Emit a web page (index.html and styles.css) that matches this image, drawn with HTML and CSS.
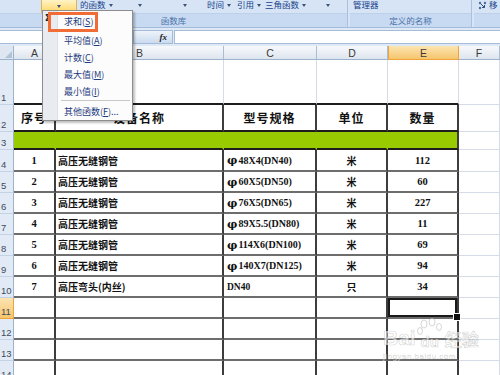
FILE: index.html
```html
<!doctype html>
<html>

<head>
    <title>自动求和</title>
    <link rel="stylesheet" href="styles.css">
</head>

<body>
    <div class="ribbon">
        <div class="group g1">
            <div class="tools tools-1">
                <span></span>
                <span class="hot"><span class="dd"></span></span>
                <span class="tool">的函数<span class="dd"></span></span>
                <span class="tool"><span class="dd"></span></span>
                <span class="tool"><span class="dd"></span></span>
                <span class="tool">时间<span class="dd"></span></span>
                <span class="tool">引用<span class="dd"></span></span>
                <span class="tool">三角函数<span class="dd"></span></span>
                <span class="tool"><span class="dd"></span></span>
            </div>
            <div class="glabel">函数库</div>
        </div>
        <div class="group g2">
            <div class="tools"><span class="tool">管理器</span></div>
            <div class="glabel">定义的名称</div>
        </div>
        <div class="group g3">
            <div class="tools">
                <svg class="trace" width="9" height="9" viewBox="0 0 9 9">
                    <circle cx="2" cy="2" r="1.2" fill="#4d6c99" />
                    <circle cx="7" cy="2" r="1.2" fill="#4d6c99" />
                    <circle cx="2" cy="7" r="1.2" fill="#4d6c99" />
                    <path d="M3 3 L6.5 6.5 M6.5 4 V6.5 H4" stroke="#2f4f80" stroke-width="1" fill="none" />
                </svg>
                <span class="tool">移</span>
            </div>
            <div class="glabel"></div>
        </div>
    </div>

    <div class="fbar">
        <div class="namebox"></div>
        <div class="split"></div>
        <div class="fx"><i>fx</i></div>
        <div class="finput"></div>
    </div>

    <div class="sheet">
        <div class="row hdr">
            <div class="c corner"></div>
            <div class="c ch">A</div>
            <div class="c ch">B</div>
            <div class="c ch">C</div>
            <div class="c ch">D</div>
            <div class="c ch on">E</div>
            <div class="c ch">F</div>
        </div>

        <div class="row r1">
            <div class="c rh">1</div>
            <div class="c top"></div>
            <div class="c top"></div>
            <div class="c top"></div>
            <div class="c top"></div>
            <div class="c top"></div>
            <div class="c"></div>
        </div>

        <div class="row r2">
            <div class="c rh">2</div>
            <div class="c t th">序号</div>
            <div class="c t th">设备名称</div>
            <div class="c t th">型号规格</div>
            <div class="c t th">单位</div>
            <div class="c t th">数量</div>
            <div class="c"></div>
        </div>

        <div class="row r3">
            <div class="c rh">3</div>
            <div class="c g"></div>
            <div class="c g"></div>
            <div class="c g"></div>
            <div class="c g"></div>
            <div class="c g end"></div>
            <div class="c"></div>
        </div>

        <div class="row r4">
            <div class="c rh">4</div>
            <div class="c t n">1</div>
            <div class="c t nm">高压无缝钢管</div>
            <div class="c t sp"><span class="phi">φ</span>48X4(DN40)</div>
            <div class="c t u">米</div>
            <div class="c t n">112</div>
            <div class="c"></div>
        </div>

        <div class="row rn">
            <div class="c rh">5</div>
            <div class="c t n">2</div>
            <div class="c t nm">高压无缝钢管</div>
            <div class="c t sp"><span class="phi">φ</span>60X5(DN50)</div>
            <div class="c t u">米</div>
            <div class="c t n">60</div>
            <div class="c"></div>
        </div>

        <div class="row rn">
            <div class="c rh">6</div>
            <div class="c t n">3</div>
            <div class="c t nm">高压无缝钢管</div>
            <div class="c t sp"><span class="phi">φ</span>76X5(DN65)</div>
            <div class="c t u">米</div>
            <div class="c t n">227</div>
            <div class="c"></div>
        </div>

        <div class="row rn">
            <div class="c rh">7</div>
            <div class="c t n">4</div>
            <div class="c t nm">高压无缝钢管</div>
            <div class="c t sp"><span class="phi">φ</span>89X5.5(DN80)</div>
            <div class="c t u">米</div>
            <div class="c t n">11</div>
            <div class="c"></div>
        </div>

        <div class="row rn">
            <div class="c rh">8</div>
            <div class="c t n">5</div>
            <div class="c t nm">高压无缝钢管</div>
            <div class="c t sp"><span class="phi">φ</span>114X6(DN100)</div>
            <div class="c t u">米</div>
            <div class="c t n">69</div>
            <div class="c"></div>
        </div>

        <div class="row rn">
            <div class="c rh">9</div>
            <div class="c t n">6</div>
            <div class="c t nm">高压无缝钢管</div>
            <div class="c t sp"><span class="phi">φ</span>140X7(DN125)</div>
            <div class="c t u">米</div>
            <div class="c t n">94</div>
            <div class="c"></div>
        </div>

        <div class="row rn">
            <div class="c rh">10</div>
            <div class="c t n">7</div>
            <div class="c t nm">高压弯头(内丝)</div>
            <div class="c t sp small">DN40</div>
            <div class="c t u">只</div>
            <div class="c t n">34</div>
            <div class="c"></div>
        </div>

        <div class="row rn">
            <div class="c rh on">11</div>
            <div class="c t"></div>
            <div class="c t"></div>
            <div class="c t"></div>
            <div class="c t"></div>
            <div class="c t sel"></div>
            <div class="c"></div>
        </div>

        <div class="row rn">
            <div class="c rh">12</div>
            <div class="c t"></div>
            <div class="c t"></div>
            <div class="c t"></div>
            <div class="c t"></div>
            <div class="c t"></div>
            <div class="c"></div>
        </div>

        <div class="row rn">
            <div class="c rh">13</div>
            <div class="c t"></div>
            <div class="c t"></div>
            <div class="c t"></div>
            <div class="c t"></div>
            <div class="c t"></div>
            <div class="c"></div>
        </div>

        <div class="row rn">
            <div class="c rh">14</div>
            <div class="c t"></div>
            <div class="c t"></div>
            <div class="c t"></div>
            <div class="c t"></div>
            <div class="c t"></div>
            <div class="c"></div>
        </div>
    </div>

    <!-- 自动求和 下拉菜单 -->
    <div class="menu">
        <div class="gutter"><span class="sigma">Σ</span></div>
        <ul class="items">
            <li class="first">求和(<u>S</u>)</li>
            <li>平均值(<u>A</u>)</li>
            <li>计数(<u>C</u>)</li>
            <li>最大值(<u>M</u>)</li>
            <li>最小值(<u>I</u>)</li>
            <li class="sep"></li>
            <li>其他函数(<u>F</u>)...</li>
        </ul>
        <div class="hl"></div>
    </div>

    <div class="wm">
        <div class="wm-logo">
            <span>Bai</span>
            <span class="paw">
                <svg width="26" height="26" viewBox="0 0 26 26">
                    <g fill="rgba(255,255,255,0.4)" stroke="rgba(110,110,110,0.28)" stroke-width="1">
                        <ellipse cx="7" cy="6" rx="3" ry="4" />
                        <ellipse cx="15" cy="4" rx="3" ry="4" />
                        <ellipse cx="22" cy="9" rx="2.5" ry="3.5" />
                        <ellipse cx="3" cy="13" rx="2.5" ry="3.5" />
                    </g>
                </svg>
                <span class="du">du</span>
            </span>
            <span class="cn">经验</span>
        </div>
        <div class="wm-url">jingyan.baidu.com</div>
    </div>
</body>

</html>
```

FILE: styles.css
```css
html,
body {
    margin: 0;
    padding: 0;
    width: 100%;
    height: 100%;
    overflow: hidden;
}

* {
    box-sizing: border-box;
}

body {
    position: relative;
    background: #dfe9f5;
    font-family: "Liberation Sans", "Noto Sans CJK SC", sans-serif;
}

/* ribbon */
.ribbon {
    display: flex;
    height: 28px;
    background: #d7e4f5;
    border-bottom: 1px solid #a3bcdb;
}

.group {
    display: flex;
    flex-direction: column;
    border-right: 1px solid #a9c1df;
    margin-right: 2px;
}

.g1 {
    width: 348px;
}

.g2 {
    width: 122px;
}

.g3 {
    flex: 1;
    border-right: 0;
    margin-right: 0;
}

.tools {
    display: flex;
    align-items: flex-end;
    height: 13px;
    overflow: hidden;
    font-family: "Noto Sans CJK SC", sans-serif;
    font-size: 8.5px;
    color: #15428b;
}

.tools-1 {
    display: grid;
    grid-template-columns: 41px 36px 58px 45px 27px 30px 28px 58px 1fr;
    align-items: end;
}

.tool {
    line-height: 9px;
    margin-bottom: 4px;
    white-space: nowrap;
}

.tools-1 .tool:nth-child(3) {
    padding-left: 3px;
}

.g2 .tool {
    padding-left: 3px;
}

.g3 .tools {
    padding-left: 4px;
    gap: 2px;
}

.trace {
    margin-bottom: 3px;
}

.dd {
    display: inline-block;
    width: 0;
    height: 0;
    margin-left: 3px;
    vertical-align: middle;
    border-left: 2.5px solid transparent;
    border-right: 2.5px solid transparent;
    border-top: 3px solid #3b5478;
}

.hot {
    align-self: stretch;
    display: flex;
    align-items: center;
    justify-content: center;
    background: linear-gradient(#fff3c6, #ffd767);
    border: 1px solid #d8b55e;
    border-top: 0;
}

.hot .dd {
    margin-left: 0;
}

.glabel {
    height: 14px;
    background: #c7daf1;
    border-top: 1px solid #bdd1ea;
    color: #4a70a8;
    font-family: "Noto Sans CJK SC", sans-serif;
    font-size: 8.5px;
    line-height: 13px;
    text-align: center;
}

/* formula bar */
.fbar {
    display: flex;
    height: 14px;
    margin-top: 2px;
}

.namebox {
    width: 125px;
    background: #fff;
    border: 1px solid #a5bcd8;
    border-left: 0;
}

.split {
    width: 8px;
}

.fx {
    width: 40px;
    background: linear-gradient(#eef3fa, #cbdbef);
    border: 1px solid #a5bcd8;
    text-align: right;
    padding-right: 5px;
    font: italic bold 9px "Liberation Serif", serif;
    line-height: 12px;
    color: #222;
}

.finput {
    flex: 1;
    margin-left: 1px;
    background: #fff;
    border: 1px solid #a5bcd8;
    border-right: 0;
}

/* sheet */
.sheet {
    margin-top: 2px;
    background: #fff;
}

.row {
    display: grid;
    grid-template-columns: 14px 42px 168px 93px 71px 71px 1fr;
}

.hdr {
    height: 14px;
}

.r1 {
    height: 45px;
}

.r2 {
    height: 27px;
}

.r3 {
    height: 18px;
}

.r4 {
    height: 22px;
}

.rn {
    height: 21px;
}

.c {
    display: flex;
    align-items: center;
    min-width: 0;
    overflow: hidden;
    white-space: nowrap;
    border-right: 1px solid #d5dce7;
    border-bottom: 1px solid #d5dce7;
    color: #111;
}

.corner {
    position: relative;
    background: #dde6f1;
    border-right: 1px solid #9db3cd;
    border-bottom: 1px solid #9db3cd;
}

.corner::after {
    content: "";
    position: absolute;
    right: 1px;
    bottom: 1px;
    border-left: 7px solid transparent;
    border-bottom: 7px solid #b3c3d6;
}

.ch {
    justify-content: center;
    background: linear-gradient(#f7f9fc, #dee5ee);
    border-right: 1px solid #aabdd4;
    border-bottom: 1px solid #9db3cd;
    font-size: 10.5px;
    color: #3a3a3a;
}

.ch.on {
    background: linear-gradient(#fce5b2, #f5c56c);
    border-left: 1px solid #f0a23c;
    border-right-color: #f0a23c;
    border-bottom-color: #f0a23c;
}

.rh {
    align-items: flex-end;
    padding: 0 0 1px 1px;
    background: #e2eaf5;
    border-right: 1px solid #9db3cd;
    border-bottom: 1px solid #c4d2e5;
    font-size: 9.5px;
    line-height: 11px;
    color: #3e4b5e;
}

.rh.on {
    background: linear-gradient(#fce5b2, #f5c56c);
    border-right-color: #f0a23c;
    border-bottom-color: #f0a23c;
}

.top {
    border-bottom: 2px solid #1d1d1d;
}

.t {
    border-right: 2px solid #3d3d3d;
    border-bottom: 2px solid #6d6d6d;
}

.th {
    justify-content: center;
    border-bottom-color: #1d1d1d;
    font: bold 12px "Noto Sans CJK SC", sans-serif;
    letter-spacing: 1px;
}

.g {
    background: #99cc00;
    border-right: 2px solid #99cc00;
    border-bottom: 2px solid #1d1d1d;
}

.g.end {
    border-right-color: #3d3d3d;
}

.n {
    justify-content: center;
    font: bold 10.5px "Liberation Serif", serif;
}

.nm {
    padding-left: 2px;
    font: bold 10px "Noto Sans CJK SC", sans-serif;
}

.sp {
    padding-left: 3px;
    font: bold 10px "Liberation Serif", serif;
}

.sp.small {
    font-size: 9.5px;
}

.phi {
    font: bold 11.5px "DejaVu Serif", serif;
    margin-right: 1px;
}

.u {
    justify-content: center;
    font: bold 10px "Noto Sans CJK SC", sans-serif;
}

.sel {
    position: relative;
    z-index: 1;
    overflow: visible;
    box-shadow: inset 0 0 0 2px #1a1a1a;
}

.sel::after {
    content: "";
    position: absolute;
    right: -4px;
    bottom: -4px;
    width: 6px;
    height: 6px;
    background: #111;
    border: 1px solid #fff;
}

/* dropdown menu */
.menu {
    position: absolute;
    left: 42px;
    top: 10px;
    z-index: 5;
    display: flex;
    width: 91px;
    height: 111px;
    background: #fcfcfc;
    border: 1px solid #8d8d8d;
    box-shadow: 2px 2px 2px rgba(0, 0, 0, 0.25);
    font: 9px "Noto Sans CJK SC", sans-serif;
    color: #1d3b7c;
}

.gutter {
    width: 15px;
    padding: 4px 0 0 2px;
    background: #e8ecf1;
    border-right: 1px solid #dde1e7;
}

.sigma {
    display: block;
    font: bold 8px "DejaVu Sans", sans-serif;
    line-height: 8px;
    color: #222;
}

.items {
    flex: 1;
    list-style: none;
    margin: 0;
    padding: 0;
}

.items li {
    display: flex;
    align-items: center;
    height: 17px;
    padding-left: 6px;
    white-space: nowrap;
}

.items li.first {
    height: 21px;
}

.items li.sep {
    height: 3px;
    margin: 0 2px 0 3px;
    border-top: 1px solid #c8c8c8;
}

.items u {
    text-underline-offset: 1px;
}

.hl {
    position: absolute;
    left: 5px;
    top: 1px;
    width: 50px;
    height: 20px;
    border: 3px solid #f26d35;
}

/* watermark */
.wm {
    position: absolute;
    left: 383px;
    top: 318px;
    z-index: 4;
    pointer-events: none;
}

.wm-logo {
    display: flex;
    align-items: flex-end;
    font: bold 21px "Liberation Sans", sans-serif;
    line-height: 24px;
    color: rgba(255, 255, 255, 0.6);
    -webkit-text-stroke: 0.7px rgba(110, 110, 110, 0.3);
}

.paw {
    position: relative;
    display: flex;
    flex-direction: column;
    align-items: center;
    margin-left: 1px;
}

.paw svg {
    margin-bottom: -10px;
}

.du {
    font-size: 15px;
    line-height: 16px;
}

.cn {
    font: bold 17px "Noto Sans CJK SC", sans-serif;
    line-height: 22px;
    margin-left: 2px;
}

.wm-url {
    margin-top: 2px;
    font: 8px "Liberation Sans", sans-serif;
    color: rgba(255, 255, 255, 0.7);
    -webkit-text-stroke: 0.4px rgba(110, 110, 110, 0.28);
    letter-spacing: 0.5px;
}
```
